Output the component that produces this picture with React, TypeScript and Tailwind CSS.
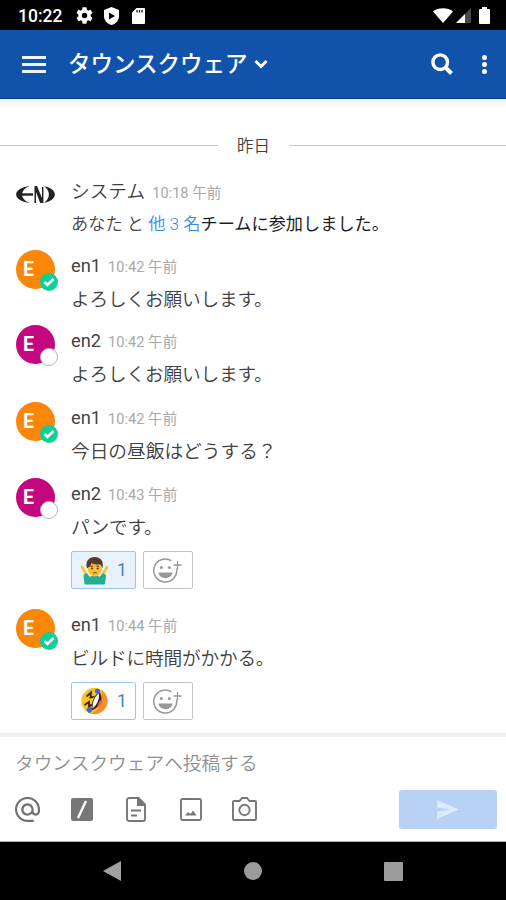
import { ReactNode } from 'react';

type Status = 'online' | 'offline';

interface Post {
  user: string;
  time: string;
  text: string;
  status: Status;
  height: string;
  reaction?: ReactNode;
  mine?: boolean;
}

function ShrugEmoji() {
  return (
    <svg className="h-[29px] w-[27px]" viewBox="0 0 27 29">
      <path d="M1 11l4.500 8M26 11l-4.500 8" stroke="#fbc02d" strokeWidth="2.600" strokeLinecap="round" />
      <path d="M2.500 19l3-2 3.500 4 2-1.500h5.500l2 1.500 3.500-4 3 2-.8 8c-.2 1-.7 1.500-1.700 1.500H5c-1 0-1.500-.5-1.700-1.500z" fill="#26ae91" />
      <ellipse cx="13.700" cy="13" rx="7" ry="7.500" fill="#fdbf2d" />
      <path d="M6 12.500C4 5 8 1 13.700 1s9.600 4 7.600 11.500l-1.800-4c-4 .3-7-.3-9-1.500-.5 2-1.500 4-2.700 4z" fill="#543930" />
      <path d="M9.500 10.500l2.500-.6M15.500 9.900l2.500.6" stroke="#543930" strokeWidth="1" />
      <circle cx="11" cy="12.500" r="1" fill="#403030" />
      <circle cx="16.700" cy="12.500" r="1" fill="#403030" />
      <path d="M12 17.200q2-1.500 4 0" stroke="#754316" strokeWidth="1" fill="none" />
    </svg>
  );
}

function RoflEmoji() {
  return (
    <svg className="h-[28px] w-[27px]" viewBox="0 0 27 28">
      <circle cx="13.500" cy="14" r="13.200" fill="#fcc222" />
      <path d="M21 3.200A13.200 13.200 0 0 1 10 26.700C18 23 22 13 21 3.200z" fill="#f58f2a" />
      <path d="M18.500 5c4.500 6 1.500 15-8 18.500C10 16 13 8 18.500 5z" fill="#33251c" />
      <path d="M17.800 6.500c1 5-1.800 11.500-6.300 15C11.500 15 13.500 9.500 17.800 6.500z" fill="#fff" />
      <path d="M20.500 13c1.500 2-1 6-4 7 0-3 1-6 4-7z" fill="#ef5350" />
      <path d="M5.500 9.500l4.500-4-.5 5 4-1M3.500 18l4.500-3v4.500l3-2" stroke="#33251c" strokeWidth="1.800" fill="none" />
      <path d="M14 2.500c3-2 6 0 5 4-3 1-6-1-5-4zM5.500 23.500c0-3 3-4.500 5.500-2.500.5 3-1 5-3 5z" fill="#3b64e0" />
    </svg>
  );
}

const posts: Post[] = [
  { user: 'en1', time: '10:42 午前', text: 'よろしくお願いします。', status: 'online', height: 'h-[75px]' },
  { user: 'en2', time: '10:42 午前', text: 'よろしくお願いします。', status: 'offline', height: 'h-[77px]' },
  { user: 'en1', time: '10:42 午前', text: '今日の昼飯はどうする？', status: 'online', height: 'h-[76px]' },
  { user: 'en2', time: '10:43 午前', text: 'パンです。', status: 'offline', height: 'h-[131px]', reaction: <ShrugEmoji />, mine: true },
  { user: 'en1', time: '10:44 午前', text: 'ビルドに時間がかかる。', status: 'online', height: 'h-[127px]', reaction: <RoflEmoji /> },
];

function StatusBar() {
  return (
    <div className="flex h-[30px] items-center bg-black pt-px pl-[18px] pr-[16px] text-white">
      <span className="w-[58px] pt-[2px] text-[17.500px] leading-none font-medium">10:22</span>
      <svg className="h-[17px] w-[17px] fill-white" viewBox="2 2 20 20">
        <path d="M19.140 12.940c.04-.3.060-.61.060-.94 0-.32-.02-.64-.07-.94l2.030-1.580c.18-.14.230-.41.120-.61l-1.920-3.320c-.12-.22-.37-.29-.59-.22l-2.390.96c-.5-.38-1.030-.7-1.620-.94l-.36-2.540c-.04-.24-.24-.41-.48-.41h-3.840c-.24 0-.43.170-.47.410l-.36 2.540c-.59.240-1.130.57-1.620.94l-2.390-.96c-.22-.08-.47 0-.59.220L2.740 8.870c-.12.210-.08.470.120.610l2.030 1.580c-.05.3-.09.630-.09.940s.02.640.070.940l-2.030 1.580c-.18.140-.23.410-.12.610l1.920 3.320c.12.220.370.290.590.220l2.390-.96c.5.380 1.030.7 1.620.94l.36 2.540c.05.240.240.410.480.410h3.840c.24 0 .44-.17.470-.41l.36-2.540c.59-.24 1.130-.56 1.620-.94l2.390.96c.22.080.470 0 .59-.22l1.920-3.320c.12-.22.070-.47-.12-.61l-2.010-1.580zM12 15.200A3.200 3.200 0 1 1 12 8.800a3.200 3.200 0 0 1 0 6.400z" />
      </svg>
      <svg className="ml-[11px] h-[18px] w-[15px]" viewBox="0 0 15 18">
        <path d="M7.500 0L15 3v6c0 4-3 8-7.500 9C3 17 0 13 0 9V3z" fill="#fff" />
        <path d="M5 5.600v6.800l6-3.400z" fill="#000" />
      </svg>
      <svg className="ml-[13px] h-[16px] w-[13px]" viewBox="0 0 13 16">
        <path d="M4.500 0H12a1 1 0 0 1 1 1v14a1 1 0 0 1-1 1H1a1 1 0 0 1-1-1V4.500z" fill="#fff" />
        <path d="M5 2v2.500M7.500 2v2.500M10 2v2.500" stroke="#000" strokeWidth="1.200" />
      </svg>
      <svg className="ml-auto h-[15px] w-[20px] fill-white" viewBox="0 0 20 15">
        <path d="M0 3.500C5-.8 15-.8 20 3.500L10 15z" />
      </svg>
      <svg className="ml-[3px] h-[15px] w-[15px]" viewBox="0 0 15 15">
        <path d="M0 15L15 0v15z" fill="#484848" />
        <path d="M0 15L9 6v9z" fill="#fff" />
      </svg>
      <svg className="ml-[8px] h-[17px] w-[11px] fill-white" viewBox="0 0 11 17">
        <path d="M3 0h5v2h2a1 1 0 0 1 1 1v13a1 1 0 0 1-1 1H1a1 1 0 0 1-1-1V3a1 1 0 0 1 1-1h2z" />
      </svg>
    </div>
  );
}

function Header() {
  return (
    <header className="flex h-[69px] items-center border-b border-[#0b3f94] bg-[#1153ab] pl-[22px] pr-[19px] text-white">
      <div className="flex w-[24px] flex-col gap-[4px]">
        <div className="h-[3px] bg-[#eef3fb]" />
        <div className="h-[3px] bg-[#eef3fb]" />
        <div className="h-[3px] bg-[#eef3fb]" />
      </div>
      <h1 className="ml-[22px] text-[22.500px] leading-none font-medium whitespace-nowrap">タウンスクウェア</h1>
      <svg className="ml-[6px] h-[10px] w-[14px]" viewBox="0 0 14 10">
        <path d="M1.500 2L7 7.500 12.500 2" stroke="#fff" strokeWidth="3" fill="none" />
      </svg>
      <svg className="ml-auto h-[22px] w-[22px]" viewBox="0 0 22 22">
        <circle cx="9.200" cy="9.200" r="7.300" stroke="#fff" strokeWidth="3.400" fill="none" />
        <path d="M14.500 14.500l6 6" stroke="#fff" strokeWidth="4" />
      </svg>
      <div className="ml-[29px] flex flex-col gap-[2px]">
        <div className="h-[5px] w-[5px] rounded-full bg-white" />
        <div className="h-[5px] w-[5px] rounded-full bg-white" />
        <div className="h-[5px] w-[5px] rounded-full bg-white" />
      </div>
    </header>
  );
}

function Avatar({ status }: { status: Status }) {
  const online = status === 'online';
  return (
    <div
      className={[
        'relative flex h-[39px] w-[39px] shrink-0 items-center rounded-full pl-[7px]',
        online ? 'bg-[#fb8608]' : 'bg-[#c4077e]',
      ].join(' ')}
    >
      <span className="text-[19.500px] leading-none font-bold text-white">E</span>
      {online ? (
        <svg className="absolute top-[23px] left-[24px] h-[18px] w-[18px]" viewBox="0 0 18 18">
          <circle cx="9" cy="9" r="9" fill="#0dd199" />
          <path d="M4.500 9l3 3 6-6" stroke="#fff" strokeWidth="2.600" fill="none" />
        </svg>
      ) : (
        <div className="absolute top-[23px] left-[24px] h-[18px] w-[18px] rounded-full border border-[#b9b5b9] bg-white" />
      )}
    </div>
  );
}

function AddReaction() {
  return (
    <div className="flex h-[38px] w-[50px] items-center rounded-[2px] border border-[#c4c4c4] pl-[9px]">
      <svg className="h-[27px] w-[30px]" viewBox="0 0 30 27" fill="none" stroke="#979797" strokeWidth="1.500">
        <path d="M18.300 3.700A11.500 11.500 0 1 0 23.600 11.500" />
        <path d="M24.500 4v8M20.500 8h8" strokeWidth="1.300" />
        <path d="M5.500 15.500h14c-1 7.500-13 7.500-14 0z" fill="#979797" stroke="none" />
        <circle cx="8.300" cy="10.500" r="1.500" fill="#979797" stroke="none" />
        <circle cx="16.300" cy="10.500" r="1.500" fill="#979797" stroke="none" />
      </svg>
    </div>
  );
}

function PostRow({ post }: { post: Post }) {
  return (
    <div className={['flex pl-[16px]', post.height].join(' ')}>
      <Avatar status={post.status} />
      <div className="ml-[16px]">
        <div className="flex h-[33px] items-baseline pt-[2px]">
          <span className="text-[18.300px] text-[#444]">{post.user}</span>
          <span className="ml-[7px] text-[14.600px] text-[#a8a8a8]">{post.time}</span>
        </div>
        <p
          className={[
            'h-[32px] text-[18.700px] leading-[34px] font-[350] whitespace-nowrap',
            post.text.endsWith('。') ? 'tracking-[-0.2px]' : '',
          ].join(' ')}
        >
          {post.text}
        </p>
        {post.reaction && (
          <div className="mt-[8px] flex gap-[7px]">
            <div
              className={[
                'flex h-[38px] w-[65px] items-center rounded-[2px] border border-[#9ec5ee] pl-[9px]',
                post.mine ? 'bg-[#e9f2fb]' : 'bg-white',
              ].join(' ')}
            >
              {post.reaction}
              <span className="ml-[9px] text-[17.500px] text-[#4183c9]">1</span>
            </div>
            <AddReaction />
          </div>
        )}
      </div>
    </div>
  );
}

function Composer() {
  return (
    <div className="h-[109px] border-t-[4px] border-b border-t-[#eeeeee] border-b-[#b5b5b5]">
      <p className="h-[49px] pl-[15px] text-[18.700px] leading-[54px] font-[350] text-[#8f8f8f]">タウンスクウェアへ投稿する</p>
      <div className="flex h-[46px] items-center pr-[9px] pl-[15px]">
        <svg className="h-[25px] w-[25px] fill-[#707070]" viewBox="2 2 20 20">
          <path d="M12 1.950c-5.520 0-10 4.480-10 10s4.480 10 10 10h5v-1.700h-5c-4.500 0-8.300-3.800-8.300-8.300s3.800-8.300 8.300-8.300 8.300 3.800 8.300 8.300v1.430c0 .9-.8 1.770-1.700 1.770s-1.700-.87-1.700-1.770v-1.430c0-2.760-2.140-5-4.900-5s-5 2.240-5 5 2.240 5 5 5c1.380 0 2.640-.56 3.540-1.470.65.890 1.770 1.470 2.960 1.470 1.970 0 3.500-1.600 3.500-3.570v-1.430c0-5.520-4.480-10-10-10zm0 13.200c-1.760 0-3.200-1.440-3.200-3.200s1.440-3.200 3.200-3.200 3.200 1.440 3.200 3.200-1.440 3.200-3.200 3.200z" />
        </svg>
        <svg className="ml-[31px] h-[23px] w-[22px]" viewBox="0 0 22 23">
          <rect width="22" height="23" rx="2" fill="#777" />
          <path d="M7 20L15 3" stroke="#fff" strokeWidth="2.400" />
        </svg>
        <svg className="ml-[33px] h-[25px] w-[20px]" viewBox="0 0 20 25" fill="none" stroke="#777" strokeWidth="1.900">
          <path d="M3 1h9.500L19 7.500V22a2 2 0 0 1-2 2H3a2 2 0 0 1-2-2V3a2 2 0 0 1 2-2z" />
          <path d="M12 1v7h7z" fill="#777" />
          <path d="M5 13.500h10M5 18.500h6" />
        </svg>
        <svg className="ml-[34px] h-[23px] w-[22px]" viewBox="0 0 22 23" fill="none" stroke="#777" strokeWidth="1.900">
          <rect x="1" y="1" width="20" height="21" rx="1.500" />
          <path d="M5 17.500l3-3.500 2.500 2 2.500-3.500 3.500 5z" fill="#777" stroke="none" />
        </svg>
        <svg className="ml-[30px] h-[24px] w-[25px]" viewBox="0 0 25 24" fill="none" stroke="#777" strokeWidth="1.900">
          <path d="M2 4h5.500l2.500-3h5l2.500 3H23a1 1 0 0 1 1 1v17a1 1 0 0 1-1 1H2a1 1 0 0 1-1-1V5a1 1 0 0 1 1-1z" />
          <circle cx="12.500" cy="13" r="5.200" />
        </svg>
        <button className="ml-auto flex h-[39px] w-[98px] items-center justify-center rounded-[3px] bg-[#b8d1f5]">
          <svg className="h-[19px] w-[22px] fill-[#dceafb]" viewBox="0 0 22 19">
            <path d="M0 0l22 9.500L0 19v-7.500l13-2-13-2z" />
          </svg>
        </button>
      </div>
    </div>
  );
}

function NavBar() {
  return (
    <div className="flex h-[58px] items-center bg-black pl-[103px]">
      <svg className="h-[20px] w-[19px] fill-[#a0a0a0]" viewBox="0 0 19 20">
        <path d="M18 0v20L0 10z" />
      </svg>
      <div className="ml-[122px] h-[18px] w-[18px] rounded-full bg-[#9b9b9b]" />
      <div className="ml-[122px] h-[19px] w-[19px] rounded-[1px] bg-[#9b9b9b]" />
    </div>
  );
}

export default function App() {
  return (
    <div className="flex h-[900px] w-[506px] flex-col overflow-hidden bg-white font-[Roboto,'Noto_Sans_CJK_JP',sans-serif] text-[#404040]">
      <StatusBar />
      <Header />

      {/* Messages */}
      <main className="h-[634px] bg-linear-to-b from-[#f1f1f1] to-white to-[10px]">
        <div className="mt-[32px] flex h-[28px] items-center">
          <div className="h-px w-[218px] bg-[#c9c9c9]" />
          <span className="w-[71px] pt-[3px] text-center text-[16.500px] leading-[28px] font-[350]">昨日</span>
          <div className="h-px flex-1 bg-[#c9c9c9]" />
        </div>

        <div className="mt-[15px] flex h-[76px] pl-[16px]">
          <svg className="mt-[12px] h-[17px] w-[39px] fill-[#222]" viewBox="0 0 39 17">
            <path d="M14 0C-4.500 2-4.500 15 14 17C3.500 13.500 3.500 3.500 14 0z" />
            <path d="M4 7.300h13v2.400H4z" />
            <path d="M18.500 17V0h2.500l5 12V1h1.400v16h-3.200L20 6v11z" />
            <path d="M28 0C42.500 3 42.500 14 28 17C34.500 12 34.500 5 28 0z" />
          </svg>
          <div className="ml-[16px]">
            <div className="flex h-[33px] items-baseline pt-[4px]">
              <span className="text-[18.700px] leading-[28px] font-[350]">システム</span>
              <span className="ml-[7px] text-[14.600px] text-[#a8a8a8]">10:18 午前</span>
            </div>
            <p className="h-[32px] text-[17.200px] leading-[34px] font-[350] whitespace-nowrap text-[#444]">
              あなた と <span className="text-[#3d8ce4]">他 3 名</span>
              <span className="font-normal text-[#1c1c1c]">チームに参加しました。</span>
            </p>
          </div>
        </div>

        {posts.map((post, i) => (
          <PostRow key={i} post={post} />
        ))}
      </main>

      <Composer />
      <NavBar />
    </div>
  );
}
